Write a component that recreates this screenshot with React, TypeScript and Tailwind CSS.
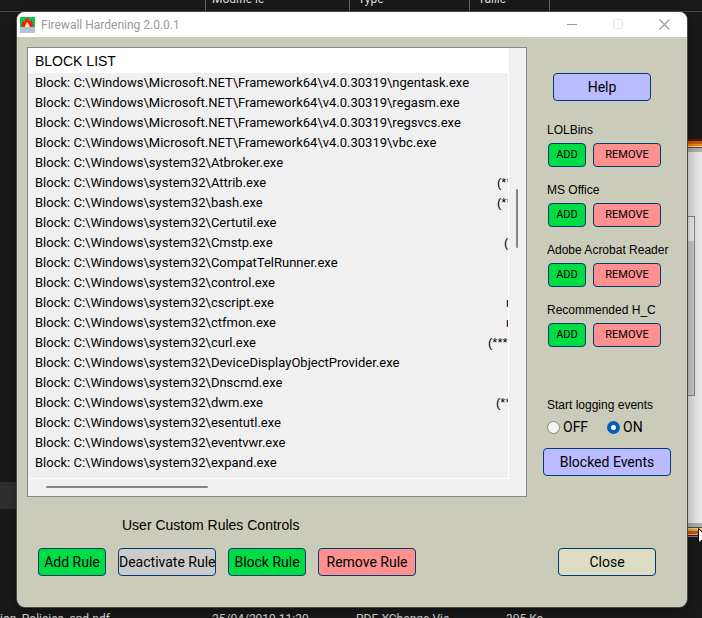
import type { ReactNode } from 'react';
import { clsx } from 'clsx';

interface BlockRow {
    path: string;
    note?: string;
    noteClass?: string;
}

const ROWS: BlockRow[] = [
    { path: 'C:\\Windows\\Microsoft.NET\\Framework64\\v4.0.30319\\ngentask.exe' },
    { path: 'C:\\Windows\\Microsoft.NET\\Framework64\\v4.0.30319\\regasm.exe' },
    { path: 'C:\\Windows\\Microsoft.NET\\Framework64\\v4.0.30319\\regsvcs.exe' },
    { path: 'C:\\Windows\\Microsoft.NET\\Framework64\\v4.0.30319\\vbc.exe' },
    { path: 'C:\\Windows\\system32\\Atbroker.exe' },
    { path: 'C:\\Windows\\system32\\Attrib.exe', note: '(**', noteClass: 'w-[11px]' },
    { path: 'C:\\Windows\\system32\\bash.exe', note: '(**', noteClass: 'w-[11px]' },
    { path: 'C:\\Windows\\system32\\Certutil.exe' },
    { path: 'C:\\Windows\\system32\\Cmstp.exe', note: '(', noteClass: 'w-1' },
    { path: 'C:\\Windows\\system32\\CompatTelRunner.exe' },
    { path: 'C:\\Windows\\system32\\control.exe' },
    { path: 'C:\\Windows\\system32\\cscript.exe', note: 'n', noteClass: 'w-0.5' },
    { path: 'C:\\Windows\\system32\\ctfmon.exe', note: 'n', noteClass: 'w-0.5' },
    { path: 'C:\\Windows\\system32\\curl.exe', note: '(***', noteClass: 'w-5' },
    { path: 'C:\\Windows\\system32\\DeviceDisplayObjectProvider.exe' },
    { path: 'C:\\Windows\\system32\\Dnscmd.exe' },
    { path: 'C:\\Windows\\system32\\dwm.exe', note: '(**', noteClass: 'w-3' },
    { path: 'C:\\Windows\\system32\\esentutl.exe' },
    { path: 'C:\\Windows\\system32\\eventvwr.exe' },
    { path: 'C:\\Windows\\system32\\expand.exe' },
];

const GROUPS = ['LOLBins', 'MS Office', 'Adobe Acrobat Reader', 'Recommended H_C'];

const TONES = {
    blue: 'bg-[#bbbbff]',
    green: 'bg-[#00dd44]',
    red: 'bg-[#ff9090]',
    gray: 'bg-[#cccccc]',
    sand: 'bg-[#ddddc4]',
};

interface PushButtonProps {
    tone: keyof typeof TONES;
    className: string;
    label?: string;
    children: ReactNode;
}

function PushButton({ tone, className, label, children }: PushButtonProps) {
    return (
        <button
            type="button"
            aria-label={label}
            className={clsx(
                "shrink-0 rounded-[4px] border border-[#003c74] text-center font-['Roboto','Liberation_Sans',sans-serif] whitespace-nowrap text-black",
                TONES[tone],
                className,
            )}
        >
            {children}
        </button>
    );
}

function AppIcon() {
    return (
        <svg viewBox="0 0 15 16" className="h-4 w-[15px] shrink-0" aria-hidden="true">
            <rect width="15" height="16" fill="#00cc44" />
            <rect y="10" width="15" height="6" fill="#b0c4de" />
            <path d="M2 10C1 8 2 6 2 4L4 5.500 6 1 8 0.500 9.500 4.500 11.500 3 13 7C13.500 9 13 10 12 10Z" fill="#f02010" />
            <path d="M5 10C4.500 8.500 6 7.500 7 5 8.500 7 10 8.500 9.500 10Z" fill="#ffe8b0" />
        </svg>
    );
}

/* File explorer and the second window that show behind the dialog */
function Backdrop() {
    return (
        <div aria-hidden="true" className="absolute inset-0 overflow-hidden bg-[#191919] font-['Roboto','Open_Sans',sans-serif] text-xs text-[#dedede]">
            <div className="absolute inset-x-0 top-0 flex h-3 border-b border-[#4a4a4a] pl-[205px] leading-[14px] whitespace-nowrap">
                <div className="h-full w-36 border-l border-[#636363] pl-1.5"><p className="-mt-2">Modifié le</p></div>
                <div className="h-full w-[120px] border-l border-[#636363] pl-2"><p className="-mt-2">Type</p></div>
                <div className="h-full w-[81px] border-x border-[#636363] pl-2"><p className="-mt-2">Taille</p></div>
            </div>
            <div className="absolute top-[482px] left-0 h-[27px] w-10 bg-[#303030]" />
            <div className="absolute inset-x-0 top-[612px] flex leading-[14px] whitespace-nowrap">
                <span className="w-[212px]">ion_Policies_and.pdf</span>
                <span className="w-36">25/04/2019 11:30</span>
                <span className="w-[150px]">PDF-XChange Vie...</span>
                <span>305 Ko</span>
            </div>

            <div className="absolute top-[139px] right-0 flex h-[398px] w-10 flex-col bg-[#e8e8e8]">
                <div className="h-0.5 bg-[#5a1408]" />
                <div className="h-[3px] bg-[#c85a00]" />
                <div className="h-0.5 bg-[#f08c10]" />
                <div className="h-0.5 border-b border-[#505050] bg-[#ffd080]" />
                <div className="h-1 bg-[#b0b0b0]" />
                <div className="mt-16 h-[180px] w-[33px] border border-[#828790] bg-[#cfcccf]">
                    <div className="h-6 bg-[#f0f0f0]" />
                </div>
                <div className="mt-auto h-1 bg-[#b0b0b0]" />
                <div className="h-0.5 border-t border-[#505050] bg-[#d0d0d0]" />
                <div className="h-0.5 bg-[#f0a020]" />
                <div className="h-[3px] bg-[#c85a00]" />
                <div className="h-px bg-[#d0a8a0]" />
                <div className="h-px bg-[#5a1408]" />
                <div className="h-px bg-[#808080]" />
            </div>
        </div>
    );
}

function TitleBar() {
    return (
        <header className="flex h-[25px] items-center bg-white pl-[3px] font-['Roboto','Open_Sans',sans-serif] text-xs text-[#999999]">
            <AppIcon />
            <h1 className="ml-1.5 flex-1">Firewall Hardening 2.0.0.1</h1>
            <div className="flex h-full">
                <button type="button" aria-label="Minimize" className="flex w-[46px] items-center justify-center">
                    <svg width="11" height="11" viewBox="0 0 11 11"><path d="M0 5.500H10" stroke="#999" /></svg>
                </button>
                <button type="button" aria-label="Maximize" disabled className="flex w-[46px] items-center justify-center">
                    <svg width="11" height="11" viewBox="0 0 11 11" fill="none"><rect x=".5" y=".5" width="9" height="9" rx="1" stroke="#e4e4e4" /></svg>
                </button>
                <button type="button" aria-label="Close window" className="flex w-[46px] items-center justify-center">
                    <svg width="11" height="11" viewBox="0 0 11 11"><path d="M.5 .5L10.500 10.500M10.500 .5L.5 10.500" stroke="#999" strokeWidth="1.200" /></svg>
                </button>
            </div>
        </header>
    );
}

function BlockList() {
    return (
        <section aria-label="Block list" className="flex min-w-0 flex-col border border-[#828790] bg-[#f0f0f0] text-black">
            <div className="flex">
                <div className="min-w-0 flex-1 border-r border-b border-white pb-[5px]">
                    <h2 className="h-[25px] bg-white pl-[7px] text-sm leading-[26px]">BLOCK LIST</h2>
                    <ul className="text-[13px]">
                        {ROWS.map((row) => (
                            <li key={row.path} className="flex h-5 justify-between pl-[7px] leading-5 whitespace-nowrap">
                                <span className="font-['Roboto','Liberation_Sans',sans-serif]">Block: {row.path}</span>
                                {row.note && <span className={clsx('overflow-hidden', row.noteClass)}>{row.note}</span>}
                            </li>
                        ))}
                    </ul>
                </div>
                {/* vertical scrollbar */}
                <div className="w-[17px] shrink-0 pt-[141px] pl-[7px]">
                    <div className="h-[59px] w-0.5 rounded-full bg-[#858585]" />
                </div>
            </div>
            <div className="h-[17px] pt-[7px] pr-[17px] pl-[18px]">
                <div className="h-0.5 w-[35%] rounded-full bg-[#858585]" />
            </div>
        </section>
    );
}

function LogRadio({ value, defaultChecked }: { value: string; defaultChecked?: boolean }) {
    return (
        <label className="flex h-5 items-center gap-[3px] font-['Roboto','Liberation_Sans',sans-serif] text-sm">
            <input
                type="radio"
                name="logging"
                value={value}
                defaultChecked={defaultChecked}
                className="size-[13px] appearance-none rounded-full border border-[#858585] bg-[#f3f3f3] checked:border-4 checked:border-[#005fb8] checked:bg-white"
            />
            {value}
        </label>
    );
}

function SidePanel() {
    return (
        <aside className="pt-[26px] pl-4 text-xs text-black">
            <PushButton tone="blue" className="ml-2.5 block h-7 w-[98px] text-sm">Help</PushButton>
            <div className="mt-[19px] flex flex-col gap-[13px] pl-1">
                {GROUPS.map((group) => (
                    <div key={group} role="group" aria-label={group}>
                        <h3 className="mb-[3px] leading-5 whitespace-nowrap">{group}</h3>
                        <div className="flex gap-[7px] pl-px">
                            <PushButton tone="green" className="h-6 w-[38px] text-[11px]" label={`Add ${group}`}>ADD</PushButton>
                            <PushButton tone="red" className="h-6 w-[68px] text-[11px]" label={`Remove ${group}`}>REMOVE</PushButton>
                        </div>
                    </div>
                ))}
            </div>
            <fieldset className="mt-12 pl-1">
                <legend className="leading-5">Start logging events</legend>
                <div className="mt-0.5 flex gap-[19px]">
                    <LogRadio value="OFF" />
                    <LogRadio value="ON" defaultChecked />
                </div>
            </fieldset>
            <PushButton tone="blue" className="mt-[11px] block h-7 w-32 text-sm">Blocked Events</PushButton>
        </aside>
    );
}

export default function App() {
    return (
        <div className="relative min-h-screen bg-[#191919] pt-3 pr-[15px] pb-[11px] pl-[17px] font-['Liberation_Sans',Arial,sans-serif]">
            <Backdrop />
            <main className="relative overflow-hidden rounded-lg bg-[#cbcbb9] shadow-[0_0_0_1px_#4a4a4a,0_4px_16px_rgba(0,0,0,0.4)]">
                <TitleBar />
                <div className="grid grid-cols-[minmax(0,1fr)_160px] pt-2.5 pb-[31px] pl-2.5">
                    <BlockList />
                    <SidePanel />
                    <section className="pt-[18px] pl-[11px] text-sm text-black">
                        <h2 className="pl-[84px] leading-5">User Custom Rules Controls</h2>
                        <div className="mt-[13px] flex gap-3">
                            <PushButton tone="green" className="h-7 w-[68px]">Add Rule</PushButton>
                            <PushButton tone="gray" className="h-7 w-[98px]">Deactivate Rule</PushButton>
                            <PushButton tone="green" className="h-7 w-[78px]">Block Rule</PushButton>
                            <PushButton tone="red" className="h-7 w-[98px]">Remove Rule</PushButton>
                        </div>
                    </section>
                    <div className="flex items-end justify-center">
                        <PushButton tone="sand" className="h-7 w-[98px] text-sm">Close</PushButton>
                    </div>
                </div>
            </main>
            {/* mouse pointer, partly past the screen edge */}
            <div aria-hidden="true" className="absolute top-[528px] right-0 h-[18px] w-1 overflow-hidden">
                <svg viewBox="0 0 12 18" className="h-[18px] w-3 max-w-none">
                    <path d="M.5 .5V15L4 12 6.500 17 8.500 16 6.500 11H11Z" fill="#fff" stroke="#000" />
                </svg>
            </div>
        </div>
    );
}
